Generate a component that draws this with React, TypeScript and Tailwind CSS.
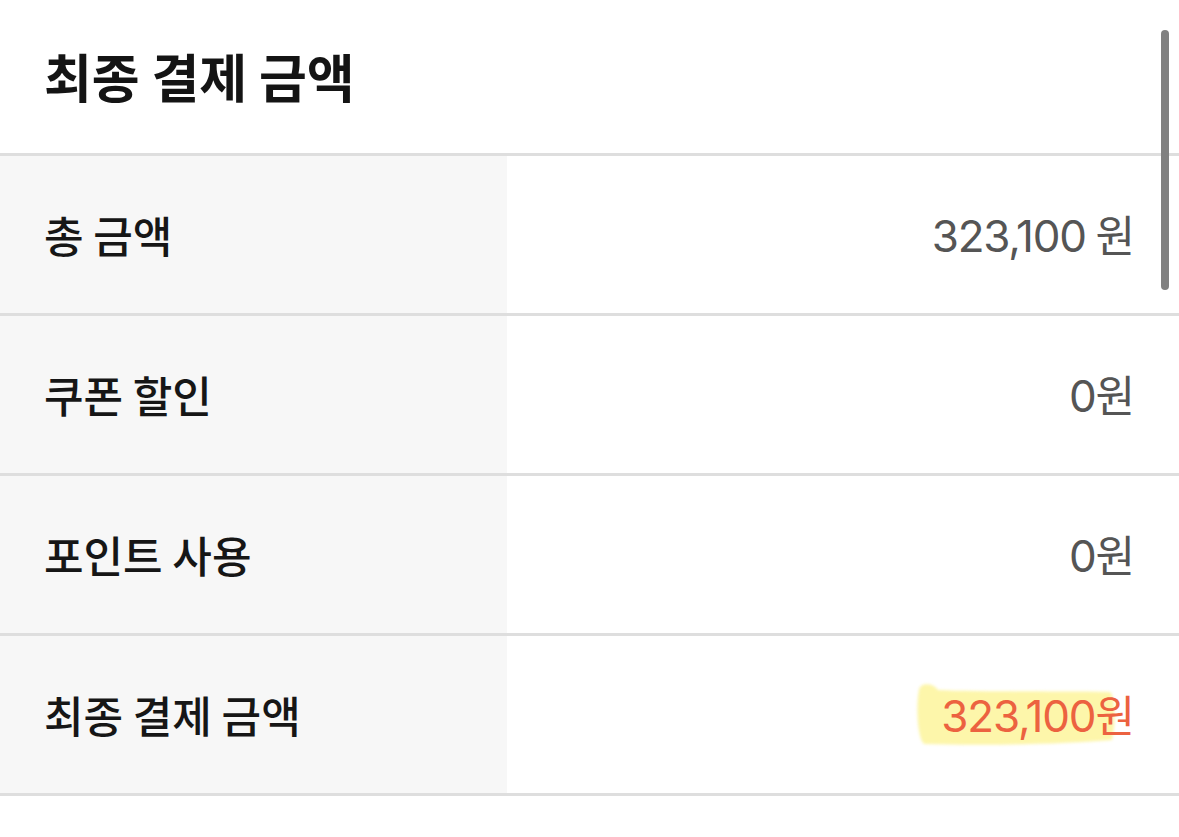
import React from 'react';

interface Row {
  label: string;
  amount: string;
  unit: string;
  highlight?: boolean;
}

const rows: Row[] = [
  { label: '총 금액', amount: '323,100', unit: ' 원' },
  { label: '쿠폰 할인', amount: '0', unit: '원' },
  { label: '포인트 사용', amount: '0', unit: '원' },
  { label: '최종 결제 금액', amount: '323,100', unit: '원', highlight: true }
];

const font = { fontFamily: '"Noto Sans CJK KR", "Noto Sans", sans-serif' };
const numFont = { fontFamily: 'Inter, "Noto Sans CJK KR", sans-serif' };

// marker stroke behind the final amount
const Highlighter = () => (
  <svg
    className="absolute left-[-25px] right-[8px] top-1/2 h-[66px] -translate-y-1/2 blur-[1.5px]"
    viewBox="0 0 200 66"
    preserveAspectRatio="none"
  >
    <path
      d="M3 8 C4 1 16 0 22 8 C60 10 140 9 194 10 C199 14 200 40 196 58 C150 62 70 64 8 62 C1 56 0 22 3 8 Z"
      fill="#fdf6aa"
    />
  </svg>
);

const App = () => {
  return (
    <div className="relative w-[1179px] h-[837px] bg-white overflow-hidden" style={font}>
      <div className="h-[153px] flex items-center pl-[44px] pb-[2px]">
        <h2 className="text-[52px] font-semibold text-[#141414]">최종 결제 금액</h2>
      </div>

      <div className="border-t-[3px] border-[#dedede]">
        {rows.map(row => (
          <div
            key={row.label}
            className="grid grid-cols-[507px_1fr] h-[160px] border-b-[3px] border-[#dedede]"
          >
            <div className="bg-[#f7f7f7] flex items-center pl-[44px]">
              <span className="text-[43px] font-medium text-[#161616]">{row.label}</span>
            </div>
            <div className="flex items-center justify-end pr-[44px]">
              <span
                className={`relative flex items-baseline ${
                  row.highlight ? 'text-[#ec6240]' : 'text-[#555555]'
                }`}
              >
                {row.highlight && <Highlighter />}
                <span className="relative text-[44px] tracking-[-1.2px] whitespace-pre" style={numFont}>
                  {row.amount}
                </span>
                <span className="relative text-[43px] whitespace-pre">{row.unit}</span>
              </span>
            </div>
          </div>
        ))}
      </div>

      <div className="absolute left-[1161px] top-[30px] w-[8px] h-[260px] rounded-full bg-[#808080]" />
    </div>
  );
};

export default App;
